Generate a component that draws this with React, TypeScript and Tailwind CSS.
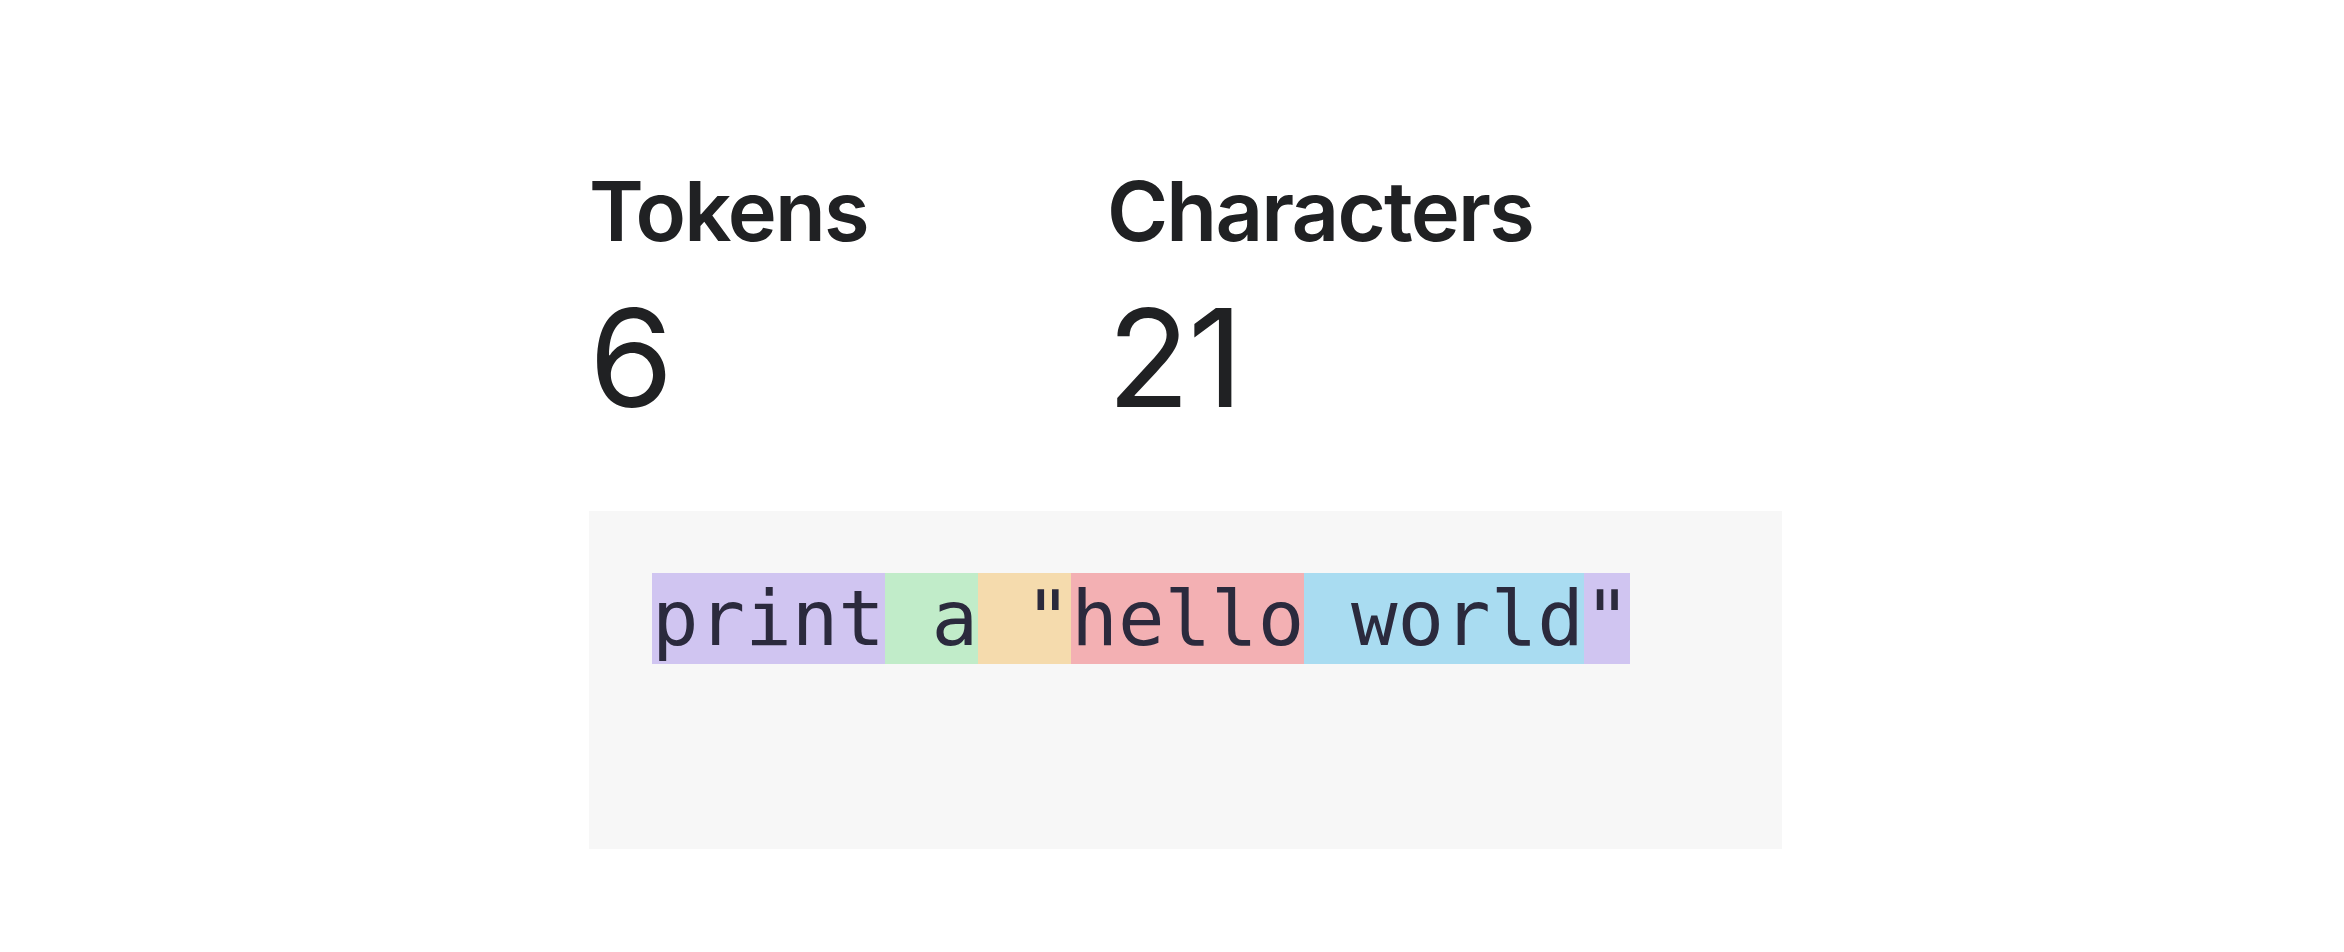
const tokens = [
  { text: "print", bg: "bg-[#d0c5f1]" },
  { text: " a", bg: "bg-[#c1ecc9]" },
  { text: ' "', bg: "bg-[#f5dbad]" },
  { text: "hello", bg: "bg-[#f3b0b3]" },
  { text: " world", bg: "bg-[#a9dcf1]" },
  { text: '"', bg: "bg-[#d0c5f1]" },
];

const Stat = ({ label, value, width }: { label: string; value: string; width: string }) => (
  <div className={`flex flex-col gap-[37px] ${width}`}>
    <p className="font-['Inter',sans-serif] text-[83px] font-semibold leading-none tracking-[-1.8px] text-[#202123]">
      {label}
    </p>
    <p className="font-['Inter',sans-serif] text-[136px] font-normal leading-none tracking-[-2px] text-[#202123]">
      {value}
    </p>
  </div>
);

const App = () => {
  return (
    <div className="min-h-[952px] w-full bg-white pl-[589px] pt-[170px]">
      {/* stats */}
      <div className="flex">
        <Stat label="Tokens" value="6" width="w-[518px]" />
        <Stat label="Characters" value="21" width="w-[420px]" />
      </div>

      {/* tokenized text */}
      <div className="mt-[85px] h-[338px] w-[1193px] bg-[#f7f7f7] pl-[63px] pt-[62px]">
        <div className="flex font-['DejaVu_Sans_Mono',monospace] text-[77.4px] text-[#2b2a3d]">
          {tokens.map((t, i) => (
            <span key={i} className={`${t.bg} h-[91px] whitespace-pre leading-[91px]`}>
              {t.text}
            </span>
          ))}
        </div>
      </div>
    </div>
  );
};

export default App;
